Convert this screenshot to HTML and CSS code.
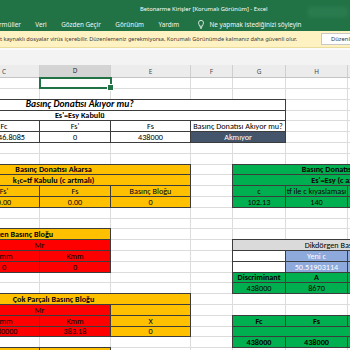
FILE: index.html
```html
<!doctype html>
<html>
<head>
<title>Betonarme Kirişler [Korumalı Görünüm] - Excel</title>
<meta http-equiv="Content-Type" content="text/html; charset=utf-8" />
<link rel="stylesheet" href="styles.css">
</head>
<body>

<div class="titlebar">
	<span class="doc-title">Betonarme Kirişler [Korumalı Görünüm] - Excel</span>
	<span class="account"></span>
</div>

<div class="tabs">
	<span class="tab tab-cut">rmüller</span>
	<span class="tab">Veri</span>
	<span class="tab">Gözden Geçir</span>
	<span class="tab">Görünüm</span>
	<span class="tab">Yardım</span>
	<span class="tell">
		<svg class="bulb" width="6" height="9" viewBox="0 0 6 9">
			<path d="M1.6 6.2 C1.6 5 0.5 4.4 0.5 2.9 A2.5 2.5 0 0 1 5.5 2.9 C5.5 4.4 4.4 5 4.4 6.2 Z" fill="none" stroke="#fff" stroke-width="0.8"/>
			<path d="M1.8 7.3 H4.2 M2.2 8.3 H3.8" stroke="#fff" stroke-width="0.8"/>
		</svg>
		Ne yapmak istediğinizi söyleyin
	</span>
</div>

<div class="protected">
	<span class="msg">t kaynaklı dosyalar virüs içerebilir. Düzenlemeniz gerekmiyorsa, Korumalı Görünümde kalmanız daha güvenli olur.</span>
	<button class="enable">Düzenlemeyi Etkinleştir</button>
</div>

<div class="formula-area"></div>

<!-- the sheet is scrolled: columns A and B sit to the left of the window -->
<table class="sheet">
	<colgroup>
		<col class="col-b"><col class="col-c"><col class="col-d"><col class="col-e"><col class="col-f">
		<col class="col-g"><col class="col-h"><col class="col-i"><col class="col-j">
	</colgroup>
	<tr class="colhead">
		<th></th><th>C</th><th class="active">D</th><th>E</th><th>F</th><th>G</th><th>H</th><th></th><th></th>
	</tr>
	<tr><td></td><td></td><td class="sel"></td><td></td><td></td><td></td><td></td><td></td><td></td></tr>
	<tr><td></td><td></td><td></td><td></td><td></td><td></td><td></td><td></td><td></td></tr>

	<!-- Basınç donatısı kontrolü -->
	<tr>
		<td></td>
		<td colspan="3" class="bd open-right big">Basınç Donatısı Akıyor mu?</td>
		<td colspan="2" class="bd open-left"></td>
		<td></td><td></td><td></td>
	</tr>
	<tr>
		<td></td>
		<td colspan="3" class="bd open-right b">Es'=Esy Kabulü</td>
		<td colspan="2" class="bd open-left"></td>
		<td></td><td></td><td></td>
	</tr>
	<tr>
		<td></td>
		<td class="bd">Fc</td><td class="bd">Fs'</td><td class="bd">Fs</td>
		<td colspan="2" class="bd">Basınç Donatısı Akıyor mu?</td>
		<td></td><td></td><td></td>
	</tr>
	<tr>
		<td></td>
		<td class="bd num">46.8085</td><td class="bd">0</td><td class="bd">438000</td>
		<td colspan="2" class="bd sl">Akmıyor</td>
		<td></td><td></td><td></td>
	</tr>
	<tr><td></td><td></td><td></td><td></td><td></td><td></td><td></td><td></td><td></td></tr>
	<tr><td></td><td></td><td></td><td></td><td></td><td></td><td></td><td></td><td></td></tr>

	<!-- Akarsa / akmazsa -->
	<tr>
		<td colspan="4" class="bd or b">Basınç Donatısı Akarsa</td>
		<td></td>
		<td colspan="4" class="bd gr b">Basınç Donatısı Akmazsa</td>
	</tr>
	<tr>
		<td colspan="4" class="bd or b">k<sub>1</sub>c=tf Kabulu (c artmalı)</td>
		<td></td>
		<td colspan="4" class="bd gr b">Es'=Esy (c azalmalı)</td>
	</tr>
	<tr>
		<td class="bd or"></td><td class="bd or">Fs'</td><td class="bd or">Fs</td><td class="bd or">Basınç Bloğu</td>
		<td></td>
		<td class="bd gr">c</td><td class="bd gr">tf ile c kıyaslaması</td><td class="bd gr"></td><td class="bd gr"></td>
	</tr>
	<tr>
		<td class="bd or"></td><td class="bd or">0.00</td><td class="bd or">0.00</td><td class="bd or">0</td>
		<td></td>
		<td class="bd gr">102.13</td><td class="bd gr">140</td><td class="bd gr"></td><td class="bd gr"></td>
	</tr>
	<tr><td></td><td></td><td></td><td></td><td></td><td></td><td></td><td></td><td></td></tr>
	<tr><td></td><td></td><td></td><td></td><td></td><td></td><td></td><td></td><td></td></tr>

	<!-- Dikdörtgen basınç bloğu -->
	<tr>
		<td colspan="3" class="bd or b">Dikdörgen Basınç Bloğu</td>
		<td></td><td></td><td></td><td></td><td></td><td></td>
	</tr>
	<tr>
		<td class="bd rd"></td><td colspan="2" class="bd rd">Mr</td>
		<td></td><td></td>
		<td colspan="4" class="bd gy">Dikdörgen Basınç Bloğu</td>
	</tr>
	<tr>
		<td class="bd rd"></td><td class="bd rd">Kmm</td><td class="bd rd">Kmm</td>
		<td></td><td></td>
		<td class="bd"></td><td class="bd bl">Yeni c</td><td class="bd bl"></td><td></td>
	</tr>
	<tr>
		<td class="bd rd"></td><td class="bd rd">0</td><td class="bd rd">0</td>
		<td></td><td></td>
		<td class="bd"></td><td class="bd bl">50.51903114</td><td class="bd bl"></td><td></td>
	</tr>
	<tr>
		<td></td><td></td><td></td><td></td><td></td>
		<td class="bd gr b">Discriminant</td><td class="bd gr b">A</td><td class="bd gr b"></td><td></td>
	</tr>
	<tr>
		<td></td><td></td><td></td><td></td><td></td>
		<td class="bd gr">438000</td><td class="bd gr">8670</td><td class="bd gr"></td><td></td>
	</tr>

	<!-- Çok parçalı basınç bloğu -->
	<tr>
		<td colspan="4" class="bd or b">Çok Parçalı Basınç Bloğu</td>
		<td></td><td></td><td></td><td></td><td></td>
	</tr>
	<tr>
		<td class="bd rd"></td><td colspan="2" class="bd rd">Mr</td><td class="bd or"></td>
		<td></td><td></td><td></td><td></td><td></td>
	</tr>
	<tr>
		<td class="bd rd"></td><td class="bd rd">Kmm</td><td class="bd rd">Kmm</td><td class="bd or">X</td>
		<td></td>
		<td class="bd gr b">Fc</td><td class="bd gr b">Fs</td><td class="bd gr b"></td><td></td>
	</tr>
	<tr>
		<td class="bd rd"></td><td class="bd rd">0.80000</td><td class="bd rd">383.18</td><td class="bd or">0</td>
		<td></td>
		<td colspan="3" class="bd gr"></td><td></td>
	</tr>
	<tr>
		<td></td><td></td><td></td><td></td><td></td>
		<td class="bd gr b">438000</td><td class="bd gr b">438000</td><td class="bd gr b"></td><td></td>
	</tr>
	<tr>
		<td class="bd or"></td><td class="bd or"></td><td class="bd or"></td><td></td>
		<td></td><td></td><td></td><td></td><td></td>
	</tr>
</table>

</body>
</html>
```

FILE: styles.css
```css
* {
	box-sizing: border-box;
}

html, body {
	margin: 0;
	padding: 0;
}

body {
	width: 350px;
	height: 350px;
	overflow: hidden;
	background: #fff;
	font-family: "Noto Sans", "Open Sans", sans-serif;
}

/* Window chrome */

.titlebar {
	display: flex;
	align-items: center;
	height: 17px;
	background: #217346;
	color: #fff;
}

.doc-title {
	margin-left: 140px;
	font-size: 5.8px;
	white-space: nowrap;
}

.account {
	width: 40px;
	height: 10px;
	margin-left: auto;
	margin-right: 2px;
	margin-top: 6px;
	background: #2b7b4f;
	filter: blur(2px);
}

.tabs {
	display: flex;
	align-items: center;
	height: 14px;
	background: #217346;
	color: #f1f6f3;
	font-size: 6.3px;
	white-space: nowrap;
}

.tab {
	margin-right: 14.5px;
}

.tab-cut {
	margin-left: -1px;
}

.tell {
	display: flex;
	align-items: center;
	gap: 6px;
	margin-left: 4px;
}

.protected {
	display: flex;
	align-items: center;
	height: 17px;
	background: #fff2c2;
	border-bottom: 1px solid #eadc9a;
	color: #3a3a3a;
	font-size: 5.6px;
	white-space: nowrap;
	overflow: hidden;
}

.msg {
	flex: none;
	width: 321px;
}

.enable {
	flex: none;
	width: 70px;
	height: 12px;
	padding: 0 0 0 9px;
	text-align: left;
	background: #fff;
	border: 1px solid #c8c8c8;
	color: #333;
	font-family: inherit;
	font-size: 5.8px;
}

.formula-area {
	height: 17px;
	background: #f3f3f3;
	border-top: 2px solid #fbfbfb;
}

/* Sheet */

.sheet {
	table-layout: fixed;
	border-collapse: collapse;
	width: 538px;
	margin-left: -84px;
	font-family: Carlito, Lato, "Liberation Sans", sans-serif;
	font-size: 8.2px;
	color: #000;
}

.col-b { width: 52px; }
.col-c { width: 71px; }
.col-d { width: 71px; }
.col-e { width: 80px; }
.col-f { width: 42px; }
.col-g { width: 53px; }
.col-h { width: 62px; }
.col-i { width: 62px; }
.col-j { width: 45px; }

/* gridlines live on rows and columns so that cell borders win */
.sheet col {
	border-right: 1px solid #dcdcdc;
}

.sheet tr {
	height: 10.8px;
	border-bottom: 1px solid #dcdcdc;
}

.sheet .colhead {
	height: 12.7px;
}

.sheet th {
	padding: 0;
	background: #ececec;
	border-right: 1px solid #cfcfcf;
	border-bottom: 1px solid #c4c4c4;
	color: #454545;
	font-family: "Noto Sans", sans-serif;
	font-size: 6.4px;
	font-weight: normal;
}

.sheet th.active {
	background: #d4d4d4;
	border-bottom: 2px solid #217346;
	color: #2b2b2b;
}

.sheet td {
	padding: 0;
	text-align: center;
	vertical-align: middle;
	white-space: nowrap;
	overflow: hidden;
	line-height: 1;
}

.sheet td.num {
	text-align: right;
	padding-right: 14px;
}

.sheet sub {
	font-size: 5.4px;
	vertical-align: -1px;
}

.sheet td.sel {
	position: relative;
	overflow: visible;
	border: 2px solid #217346;
}

.sheet td.sel::after {
	content: "";
	position: absolute;
	right: -4px;
	bottom: -4px;
	width: 5px;
	height: 5px;
	background: #217346;
	border: 1px solid #fff;
}

.bd {
	border: 1px solid #3c3c3c;
}

.open-right {
	border-right: hidden;
}

.open-left {
	border-left: hidden;
}

.b {
	font-weight: bold;
}

.big {
	font-size: 9.6px;
	font-weight: bold;
	font-style: italic;
}

.or { background: #ffc000; }
.rd { background: #ff0000; }
.gr { background: #00b050; }
.gy { background: #dadada; }
.bl { background: #8ea9db; color: #fff; }
.sl { background: #44546a; color: #fff; }
```
